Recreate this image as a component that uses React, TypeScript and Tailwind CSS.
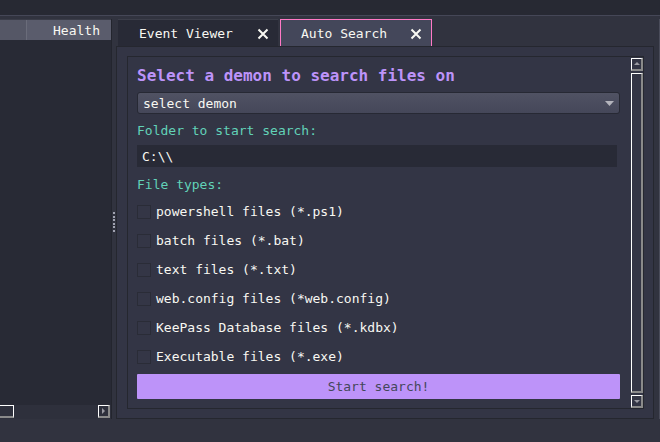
import { useState } from 'react';

const fileTypes = [
  'powershell files (*.ps1)',
  'batch files (*.bat)',
  'text files (*.txt)',
  'web.config files (*web.config)',
  'KeePass Database files (*.kdbx)',
  'Executable files (*.exe)',
];

function CloseIcon() {
  return (
    <svg width="12" height="12" viewBox="0 0 12 12" className="shrink-0">
      <path d="M1.5 1.5 L10.5 10.5 M10.5 1.5 L1.5 10.5" stroke="#f8f8f2" strokeWidth="2" />
    </svg>
  );
}

function ScrollButton({ dir }: { dir: 'up' | 'down' | 'right' }) {
  return (
    <div className="w-[12px] h-[13px] border-t border-l border-t-white border-l-white border-b-2 border-r-2 border-b-[#8a8a8a] border-r-[#8a8a8a] flex items-center justify-center">
      <svg width="6" height="6" viewBox="0 0 6 6">
        {dir === 'up' && <path d="M0 4 L3 1 L6 4 Z" fill="#9a9aa2" />}
        {dir === 'down' && <path d="M0 2 L3 5 L6 2 Z" fill="#9a9aa2" />}
        {dir === 'right' && <path d="M1 0 L4 3 L1 6 Z" fill="#9a9aa2" />}
      </svg>
    </div>
  );
}

export default function App() {
  const [checked, setChecked] = useState<boolean[]>(fileTypes.map(() => false));

  return (
    <div
      className="w-[660px] h-[442px] bg-[#31333f] text-[#f8f8f2] text-[13px] overflow-hidden flex flex-col"
      style={{ fontFamily: '"DejaVu Sans Mono", monospace' }}
    >
      {/* top strip */}
      <div className="h-[16px] shrink-0 bg-[#272933] border-b border-[#454757]" />

      <div className="flex pt-[3px]">
        {/* left panel */}
        <div className="w-[112px] h-[400px] flex flex-col border-r border-[#23252e]">
          <div className="h-[21px] flex border-t border-[#3a3c48]">
            <div className="w-[27px] bg-[#555766] border-r border-[#6a6c7a]" />
            <div className="flex-1 bg-[#5a5c6c] flex items-center pl-[26px] pt-[1px] leading-none">Health</div>
          </div>
          <div className="flex-1 bg-[#282a35]" />
          <div className="h-[14px] bg-[#2e303c] flex justify-between items-start">
            <div className="w-[14px] h-[13px] border-t border-r border-t-white border-r-white border-b-2 border-b-[#8a8a8a]" />
            <div className="mr-[1px]">
              <ScrollButton dir="right" />
            </div>
          </div>
        </div>

        {/* splitter */}
        <div className="w-[4px] flex flex-col items-center justify-center gap-[1.5px] pt-[6px]">
          {[0, 1, 2, 3, 4, 5].map((i) => (
            <div key={i} className="w-[2px] h-[2px] bg-[#a0a2b0]" />
          ))}
        </div>

        {/* right area */}
        <div className="flex-1 flex flex-col border-r border-[#4a4c5a] pr-[3px]">
          {/* tabs */}
          <div className="flex h-[27px] pl-[2px] gap-[2px]">
            <div className="w-[160px] bg-[#282a36] flex items-center pl-[21px] pr-[9px] pt-[2px] justify-between border-t border-[#3c3e4a]">
              <span>Event Viewer</span>
              <CloseIcon />
            </div>
            <div className="w-[152px] bg-[#44475a] border border-[#ff79c6] border-b-0 flex items-center pl-[20px] pr-[9px] pt-[2px] justify-between">
              <span>Auto Search</span>
              <CloseIcon />
            </div>
          </div>

          {/* pane */}
          <div className="w-[538px] h-[373px] bg-[#333545] border border-[#25272f] p-[10px] pt-[9px]">
            <div className="w-[517px] h-[353px] border border-[#25272f] flex">
              <div className="flex-1 flex flex-col pl-[9px] pr-[11px]">
                <div className="h-[22px] mt-[7px] pt-[2px] flex items-center text-[16px] font-bold text-[#bd93f9]">
                  Select a demon to search files on
                </div>
                <div className="mt-[6px] h-[22px] rounded-[3px] border border-[#272934] bg-gradient-to-b from-[#505263] to-[#454759] flex items-center justify-between pl-[5px] pr-[5px]">
                  <span className="pt-[2px]">select demon</span>
                  <svg width="9" height="5" viewBox="0 0 9 5">
                    <path d="M0 0 L9 0 L4.5 5 Z" fill="#b4b4bc" />
                  </svg>
                </div>
                <div className="mt-[6px] h-[20px] pt-[2px] flex items-center text-[#62d2b8]">Folder to start search:</div>
                <div className="mt-[5px] h-[22px] w-[480px] bg-[#282a36] flex items-center pl-[5px] pt-[1px]">C:\\</div>
                <div className="mt-[8px] h-[20px] flex items-center text-[#62d2b8]">File types:</div>
                <div className="mt-[2px] flex flex-col">
                  {fileTypes.map((f, i) => (
                    <label key={f} className="h-[29px] flex items-center gap-[5px] cursor-pointer">
                      <span
                        className="w-[14px] h-[14px] border border-[#2a2c37] bg-[#343646] flex items-center justify-center"
                        onClick={() => setChecked(checked.map((c, j) => (j === i ? !c : c)))}
                      >
                        {checked[i] && <span className="w-[8px] h-[8px] bg-[#bd93f9]" />}
                      </span>
                      <span>{f}</span>
                    </label>
                  ))}
                </div>
                <button className="mt-[3px] h-[25px] w-[483px] bg-[#bd93f9] text-[#44475a] flex items-center justify-center rounded-[1px]">
                  Start search!
                </button>
              </div>
              {/* vertical scrollbar */}
              <div className="w-[13px] flex flex-col pt-[1px] gap-[2px]">
                <ScrollButton dir="up" />
                <div className="w-[12px] h-[320px] border-t border-l border-t-white border-l-white border-r-2 border-b-2 border-r-[#8a8a8a] border-b-[#8a8a8a]" />
                <ScrollButton dir="down" />
              </div>
            </div>
          </div>
        </div>
      </div>
    </div>
  );
}
